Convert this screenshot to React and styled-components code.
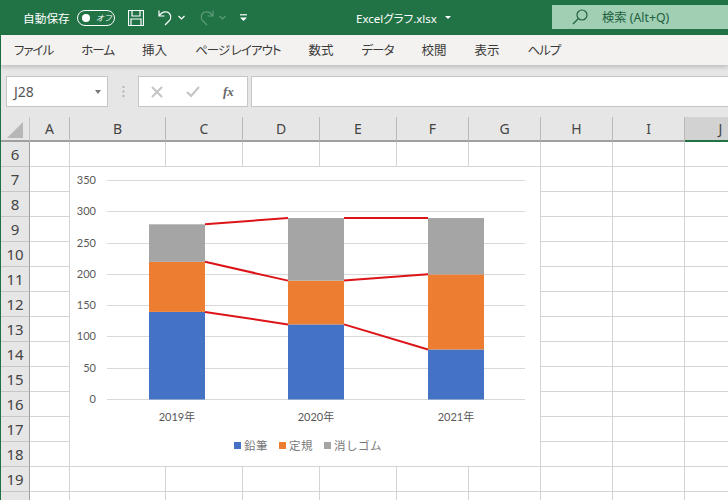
import React from "react";
import styled, { createGlobalStyle } from "styled-components";

const GREEN = "#217346";
const UI_FONT = `"Noto Sans", "Noto Sans CJK JP", sans-serif`;
const JP_FONT = `"Noto Sans CJK JP", "Noto Sans", sans-serif`;
const CHART_FONT = `Lato, "Noto Sans CJK JP", sans-serif`;

const GlobalStyle = createGlobalStyle`
    html,
    body {
        margin: 0;
        padding: 0;
        width: 728px;
        height: 500px;
        overflow: hidden;
        background: white;
    }
    * {
        box-sizing: border-box;
    }
`;

const Page = styled.div`
    width: 728px;
    height: 500px;
    overflow: hidden;
    display: flex;
    flex-direction: column;
    background: ${GREEN};
    font-family: ${UI_FONT};
`;

/* title bar */
const TitleBar = styled.header`
    height: 35px;
    flex: none;
    display: flex;
    align-items: center;
    color: white;
    position: relative;
`;
const QuickAccess = styled.div`
    display: flex;
    align-items: center;
    padding-left: 23px;
    width: 356px;
    flex: none;
`;
const AutoSave = styled.span`
    font-family: ${JP_FONT};
    font-size: 11.7px;
    width: 54px;
`;
const Toggle = styled.span`
    width: 38px;
    height: 16px;
    border: 1px solid white;
    border-radius: 8px;
    display: flex;
    align-items: center;
    padding-left: 4px;
    margin-right: 13px;
    font-family: ${JP_FONT};
    font-size: 8px;
    font-style: italic;
    gap: 6px;
    &::before {
        content: "";
        width: 8px;
        height: 8px;
        border-radius: 50%;
        background: white;
    }
`;
const QuickIcon = styled.svg`
    flex: none;
    margin-right: ${(p) => p.$gap || 0}px;
    fill: none;
    stroke: ${(p) => (p.$dim ? "#5e9c7b" : "white")};
    stroke-width: 1.2;
`;
const FileName = styled.div`
    font-family: ${UI_FONT};
    font-size: 11.5px;
    display: flex;
    align-items: center;
    width: 196px;
    flex: none;
    font-feature-settings: "palt";
    &::after {
        content: "";
        margin-left: 8px;
        border: 3px solid transparent;
        border-top: 3px solid white;
        border-bottom: 0;
    }
`;
const SearchBox = styled.div`
    flex: 1;
    height: 24px;
    margin-top: -1px;
    background: #a0cfb3;
    color: #22603f;
    display: flex;
    align-items: center;
    padding-left: 20px;
    gap: 14px;
    font-size: 12.3px;
    font-family: ${UI_FONT};
`;

/* ribbon tabs */
const TabBar = styled.nav`
    height: 30px;
    flex: none;
    margin-left: 1px;
    background: #f3f2f1;
    display: flex;
    align-items: center;
    padding: 0 0 2px 13px;
    gap: 28px;
    font-family: ${JP_FONT};
    font-size: 12.5px;
    color: #3b3a39;
    font-feature-settings: "palt";
    box-shadow: 0 2px 4px rgba(0, 0, 0, 0.18);
    position: relative;
    z-index: 1;
`;
const Tab = styled.span`
    white-space: nowrap;
    letter-spacing: ${(p) => (p.$kana ? "-1px" : "0")};
`;

/* formula bar */
const FormulaRow = styled.div`
    height: 52px;
    flex: none;
    margin-left: 1px;
    background: #e6e6e6;
    display: flex;
    align-items: center;
    padding: 11px 0 10px 5px;
`;
const Field = styled.div`
    height: 31px;
    background: white;
    border: 1px solid #c6c6c6;
    display: flex;
    align-items: center;
`;
const NameBox = styled(Field)`
    width: 102px;
    padding-left: 7px;
    justify-content: space-between;
    padding-right: 6px;
    font-size: 14px;
    color: #555;
    &::after {
        content: "";
        border: 3.5px solid transparent;
        border-top: 4px solid #777;
        border-bottom: 0;
    }
`;
const Grip = styled.svg`
    flex: none;
    margin: 0 13px 0 14px;
    fill: #b5b5b5;
`;
const FxBox = styled(Field)`
    width: 110px;
    padding-left: 12px;
    gap: 23px;
    margin-right: 3px;
`;
const FxIcon = styled.svg`
    flex: none;
    fill: none;
    stroke: #c4c4c4;
    stroke-width: 2;
`;
const FxLabel = styled.i`
    font-family: "Liberation Serif", serif;
    font-weight: 700;
    font-size: 13px;
    color: #666;
`;
const FormulaInput = styled(Field)`
    flex: 1;
    border-right: 0;
`;

/* sheet */
const Sheet = styled.main`
    flex: 1;
    margin-left: 1px;
    position: relative;
    background: white;
    overflow: hidden;
`;
const SheetGrid = styled.div`
    display: grid;
    grid-template-columns: 29px 40px 96px 77px 77px 77px 72px 72px 72px 72px 72px;
    grid-template-rows: repeat(16, 25px);
    width: 756px;
`;
const HeaderCell = styled.div`
    background: ${(p) => (p.$selected ? "#d2d2d2" : "#e6e6e6")};
    border-right: 1px solid #b9b9b9;
    border-bottom: 2px solid ${(p) => (p.$selected ? GREEN : "#9f9f9f")};
    display: flex;
    align-items: center;
    justify-content: center;
    font-family: ${UI_FONT};
    font-size: 14px;
    color: #444;
`;
const Corner = styled(HeaderCell)`
    border-right: 1px solid #c6c6c6;
    &::after {
        content: "";
        margin: 3px 0 0 -1px;
        border-style: solid;
        border-width: 0 0 16px 16px;
        border-color: transparent transparent #b7b7b7 transparent;
    }
`;
const RowHeader = styled.div`
    background: #e6e6e6;
    border-right: 1px solid #9f9f9f;
    border-bottom: 1px solid #c6c6c6;
    display: flex;
    align-items: center;
    justify-content: center;
    font-family: ${UI_FONT};
    font-size: 15px;
    color: #444;
`;
const Cell = styled.div`
    border-right: 1px solid #d4d4d4;
    border-bottom: 1px solid #d4d4d4;
`;

/* chart floats above the cells */
const ChartObject = styled.section`
    position: absolute;
    left: 69px;
    top: 50px;
    width: 470px;
    height: 299px;
    background: white;
`;
const ChartSvg = styled.svg`
    display: block;
    font-family: ${CHART_FONT};
    font-size: 11px;
    fill: #595959;
`;
const Legend = styled.div`
    position: absolute;
    left: 164px;
    top: 270px;
    display: flex;
    align-items: center;
    font-family: ${JP_FONT};
    font-size: 11.5px;
    letter-spacing: 0.5px;
    color: #7a7a7a;
    gap: 11px;
    white-space: nowrap;
`;
const LegendItem = styled.span`
    display: flex;
    align-items: center;
    gap: 3px;
    &::before {
        content: "";
        width: 7px;
        height: 7px;
        background: ${(p) => p.$color};
    }
`;

const tabs = [
    { label: "ファイル", kana: true },
    { label: "ホーム", kana: true },
    { label: "挿入" },
    { label: "ページ レイアウト", kana: true },
    { label: "数式" },
    { label: "データ", kana: true },
    { label: "校閲" },
    { label: "表示" },
    { label: "ヘルプ", kana: true },
];
const columns = ["A", "B", "C", "D", "E", "F", "G", "H", "I", "J"];
const rows = [6, 7, 8, 9, 10, 11, 12, 13, 14, 15, 16, 17, 18, 19, 20];

const series = [
    { name: "鉛筆", color: "#4472c4", values: [140, 120, 80] },
    { name: "定規", color: "#ed7d31", values: [80, 70, 120] },
    { name: "消しゴム", color: "#a5a5a5", values: [60, 100, 90] },
];
const years = ["2019年", "2020年", "2021年"];
const barLeft = [79, 218, 358];
const BAR_WIDTH = 56;
const ticks = [0, 50, 100, 150, 200, 250, 300, 350];
const yOf = (v) => 232.5 - v * 0.6257;

function Chart() {
    const stacks = years.map((_, i) => {
        let total = 0;
        return series.map((s) => {
            const from = total;
            total += s.values[i];
            return { from, to: total, color: s.color };
        });
    });
    return (
        <ChartObject>
            <ChartSvg width="470" height="299" viewBox="0 0 470 299">
                {ticks.map((t) => {
                    const y = Math.floor(yOf(t)) + 0.5;
                    return (
                        <g key={t}>
                            <line x1="37" x2="455" y1={y} y2={y} stroke="#d9d9d9" />
                            <text x="26" y={y + 3} textAnchor="end">
                                {t}
                            </text>
                        </g>
                    );
                })}
                {stacks.map((stack, i) =>
                    stack.map((b) => (
                        <rect
                            key={b.color}
                            x={barLeft[i]}
                            y={yOf(b.to)}
                            width={BAR_WIDTH}
                            height={yOf(b.from) - yOf(b.to)}
                            fill={b.color}
                        />
                    )),
                )}
                {series.map((_, s) =>
                    [0, 1].map((i) => (
                        <line
                            key={s + "-" + i}
                            x1={barLeft[i] + BAR_WIDTH}
                            x2={barLeft[i + 1]}
                            y1={yOf(stacks[i][s].to)}
                            y2={yOf(stacks[i + 1][s].to)}
                            stroke="#dc1418"
                            strokeWidth="2"
                        />
                    )),
                )}
                {years.map((y, i) => (
                    <text key={y} x={barLeft[i] + BAR_WIDTH / 2} y="254" textAnchor="middle">
                        {y}
                    </text>
                ))}
            </ChartSvg>
            <Legend>
                {series.map((s) => (
                    <LegendItem key={s.name} $color={s.color}>
                        {s.name}
                    </LegendItem>
                ))}
            </Legend>
        </ChartObject>
    );
}

function App() {
    return (
        <>
            <GlobalStyle />
            <Page>
                <TitleBar>
                    <QuickAccess>
                        <AutoSave>自動保存</AutoSave>
                        <Toggle>オフ</Toggle>
                        <QuickIcon width="16" height="16" viewBox="0 0 16 16" $gap={13}>
                            <path d="M.5.5h15v15H.5z" />
                            <path d="M4 .5V6h8V.5M3 15.5V9h10v6.5" />
                        </QuickIcon>
                        <QuickIcon width="17" height="17" viewBox="0 0 17 17" $gap={4}>
                            <path d="M2 1.5V7h5.5M2 7c2-3 5-4.5 8-4 4 1 5 6 2 9l-4 4" />
                        </QuickIcon>
                        <QuickIcon width="7" height="5" viewBox="0 0 7 5" $gap={13}>
                            <path d="M.5 1l3 3 3-3" />
                        </QuickIcon>
                        <QuickIcon width="17" height="17" viewBox="0 0 17 17" $gap={4} $dim>
                            <path d="M15 1.5V7H9.5M15 7c-2-3-5-4.5-8-4-4 1-5 6-2 9l4 4" />
                        </QuickIcon>
                        <QuickIcon width="7" height="5" viewBox="0 0 7 5" $gap={13} $dim>
                            <path d="M.5 1l3 3 3-3" />
                        </QuickIcon>
                        <QuickIcon width="9" height="8" viewBox="0 0 9 8">
                            <path d="M1 .8h7" />
                            <path d="M1 3.5h7L4.5 7z" fill="white" stroke="none" />
                        </QuickIcon>
                    </QuickAccess>
                    <FileName>Excelグラフ.xlsx</FileName>
                    <SearchBox>
                        <svg width="16" height="16" viewBox="0 0 16 16" fill="none" stroke="#22603f" strokeWidth="1.2">
                            <circle cx="10" cy="6" r="5" />
                            <path d="M6.5 9.5L1 15" />
                        </svg>
                        <span>検索 (Alt+Q)</span>
                    </SearchBox>
                </TitleBar>

                <TabBar>
                    {tabs.map((t) => (
                        <Tab key={t.label} $kana={t.kana}>
                            {t.label}
                        </Tab>
                    ))}
                </TabBar>

                <FormulaRow>
                    <NameBox>J28</NameBox>
                    <Grip width="3" height="11" viewBox="0 0 3 11">
                        <rect x="0.5" y="0" width="2" height="2" />
                        <rect x="0.5" y="4.5" width="2" height="2" />
                        <rect x="0.5" y="9" width="2" height="2" />
                    </Grip>
                    <FxBox>
                        <FxIcon width="12" height="12" viewBox="0 0 12 12">
                            <path d="M1 1l10 10M11 1L1 11" />
                        </FxIcon>
                        <FxIcon width="14" height="12" viewBox="0 0 14 12">
                            <path d="M1 6l4 4 8-9" />
                        </FxIcon>
                        <FxLabel>fx</FxLabel>
                    </FxBox>
                    <FormulaInput />
                </FormulaRow>

                <Sheet>
                    <SheetGrid>
                        <Corner />
                        {columns.map((c) => (
                            <HeaderCell key={c} $selected={c === "J"}>
                                {c}
                            </HeaderCell>
                        ))}
                        {rows.map((r) => (
                            <React.Fragment key={r}>
                                <RowHeader>{r}</RowHeader>
                                {columns.map((c) => (
                                    <Cell key={c} />
                                ))}
                            </React.Fragment>
                        ))}
                    </SheetGrid>
                    <Chart />
                </Sheet>
            </Page>
        </>
    );
}

export default App;
